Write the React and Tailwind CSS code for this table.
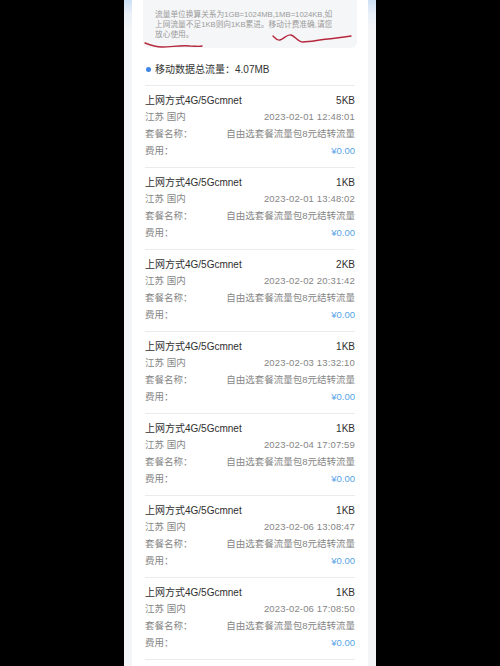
import React from "react";

const entries = [
  ["5KB", "2023-02-01 12:48:01"],
  ["1KB", "2023-02-01 13:48:02"],
  ["2KB", "2023-02-02 20:31:42"],
  ["1KB", "2023-02-03 13:32:10"],
  ["1KB", "2023-02-04 17:07:59"],
  ["1KB", "2023-02-06 13:08:47"],
  ["1KB", "2023-02-06 17:08:50"],
];

function Entry({ size, time }) {
  return (
    <div className="border-t border-[#ebebeb] pt-[5.5px] pb-[7.5px] mx-[2px]">
      <div className="h-[17px] flex items-center justify-between text-[10px] text-[#2f2f2f]">
        <span>上网方式4G/5Gcmnet</span>
        <span>{size}</span>
      </div>
      <div className="h-[17px] flex items-center justify-between text-[9.5px] text-[#868686]">
        <span>江苏 国内</span>
        <span className="tracking-[0.15px]">{time}</span>
      </div>
      <div className="h-[17px] flex items-center justify-between text-[9.5px] text-[#868686]">
        <span>套餐名称：</span>
        <span>自由选套餐流量包8元结转流量</span>
      </div>
      <div className="h-[17px] flex items-center justify-between text-[9.5px] text-[#868686]">
        <span>费用：</span>
        <span className="text-[#55a3e6]">¥0.00</span>
      </div>
    </div>
  );
}

export default function App() {
  return (
    <div className="relative w-[500px] h-[666px] bg-black flex justify-center overflow-hidden font-['Liberation_Sans','Noto_Sans_CJK_SC',sans-serif]">
      <div className="w-[252px] h-full bg-[linear-gradient(to_bottom,#cde0f5_0px,#e9f0f8_14px,#f4f5f7_30px)] px-[8px]">
        <div className="h-full bg-white px-[11px] overflow-hidden">
          <div className="mt-[-6px] rounded-[6px] bg-[#f5f6f7] pl-[12px] pt-[16px] pb-[8px] text-[7.7px] leading-[10px] text-[#9b9b9b]">
            <div className="whitespace-nowrap">流量单位换算关系为1GB=1024MB,1MB=1024KB,如</div>
            <div className="whitespace-nowrap">上网流量不足1KB则向1KB累进。移动计费准确,请您</div>
            <div className="whitespace-nowrap">放心使用。</div>
          </div>
          <div className="mt-[13px] h-[16px] flex items-center gap-[4px] pl-[3px] text-[10px] text-[#333333]">
            <span className="w-[5px] h-[5px] rounded-full bg-[#3d86e6]"></span>
            <span>移动数据总流量：4.07MB</span>
          </div>
          <div className="mt-[8px]">
            {entries.map(([s, t], i) => (
              <Entry key={i} size={s} time={t} />
            ))}
            <div className="border-t border-[#ebebeb] mx-[2px]"></div>
          </div>
        </div>
      </div>
      <svg className="absolute inset-0 pointer-events-none" width="500" height="666" viewBox="0 0 500 666">
        <path d="M145 43 C150 45, 155 47, 162 47 C172 47, 180 45, 190 46 C195 46, 199 47, 202 46" fill="none" stroke="#b5283d" strokeWidth="1.4" strokeLinecap="round" />
        <path d="M273 36 C275 38, 277 41, 280 40 C284 39, 287 34, 291 35 C295 36, 298 42, 303 42 C310 42, 318 40, 328 39 C337 38, 344 37, 351 36" fill="none" stroke="#b5283d" strokeWidth="1.4" strokeLinecap="round" />
      </svg>
    </div>
  );
}
